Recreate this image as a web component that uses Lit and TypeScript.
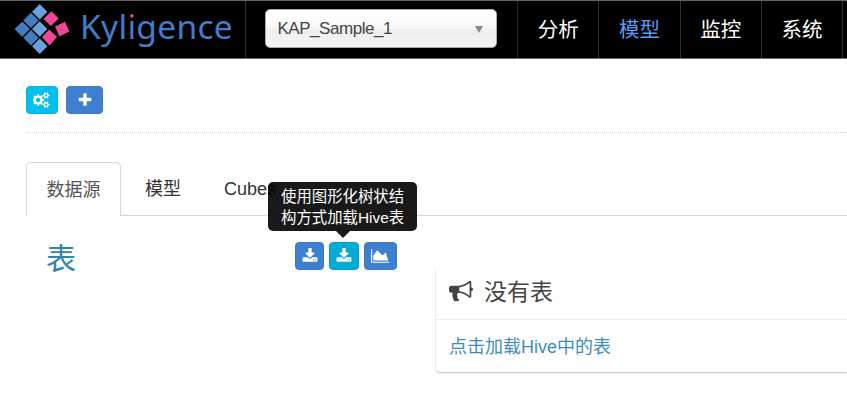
import { LitElement, html, css, svg } from "lit";
import { customElement, property } from "lit/decorators.js";

const smallGear = (y: number) =>
  `M1856 ${y}v140q0 16-149 31-12 27-30 52 51 113 51 138 0 4-4 7-122 71-124 71-8 0-46-47t-52-68q-20 2-30 2t-30-2q-14 21-52 68t-46 47q-2 0-124-71-4-3-4-7 0-25 51-138-18-25-30-52-149-15-149-31v-140q0-16 149-31 13-29 30-52-51-113-51-138 0-4 4-7 4-2 35-20t59-34 30-16q8 0 46 46.5t52 67.5q20-2 30-2t30 2q51-71 92-112l6-2q4 0 124 70 4 3 4 7 0 25-51 138 17 23 30 52 149 15 149 31z`;

const ICONS: Record<string, { w: number; d: string }> = {
  cogs: {
    w: 1920,
    d:
      "M832 896q0-106-75-181t-181-75-181 75-75 181 75 181 181 75 181-75 75-181zm768 512q0-52-38-90t-90-38-90 38-38 90q0 53 37.5 90.5t90.5 37.5 90.5-37.5 37.5-90.5zm0-1024q0-52-38-90t-90-38-90 38-38 90q0 53 37.5 90.5t90.5 37.5 90.5-37.5 37.5-90.5zm-384 421v185q0 10-7 19.5t-16 10.5l-155 24q-11 35-32 76 34 48 90 115 7 11 7 20 0 12-7 19-23 30-82.5 89.5t-78.5 59.5q-11 0-21-7l-115-90q-37 19-77 31-11 108-23 155-7 24-30 24h-186q-11 0-20-7.5t-10-17.5l-23-153q-34-10-75-31l-118 89q-7 7-20 7-11 0-21-8-144-133-144-160 0-9 7-19 10-14 41-53t47-61q-23-44-35-82l-152-24q-10-1-17-9.5t-7-19.5v-185q0-10 7-19.5t16-10.5l155-24q11-35 32-76-34-48-90-115-7-11-7-20 0-12 7-20 22-30 82-89t79-59q11 0 21 7l115 90q34-18 77-32 11-108 23-154 7-24 30-24h186q11 0 20 7.5t10 17.5l23 153q34 10 75 31l118-89q8-7 20-7 11 0 21 8 144 133 144 160 0 8-7 19-12 16-42 54t-45 60q23 48 34 82l152 23q10 2 17 10.5t7 19.5z" +
      smallGear(1338) +
      smallGear(314),
  },
  plus: {
    w: 1792,
    d: "M1600 736v192q0 40-28 68t-68 28h-416v416q0 40-28 68t-68 28h-192q-40 0-68-28t-28-68v-416h-416q-40 0-68-28t-28-68v-192q0-40 28-68t68-28h416v-416q0-40 28-68t68-28h192q40 0 68 28t28 68v416h416q40 0 68 28t28 68z",
  },
  download: {
    w: 1792,
    d: "M1344 1344q0-26-19-45t-45-19-45 19-19 45 19 45 45 19 45-19 19-45zm256 0q0-26-19-45t-45-19-45 19-19 45 19 45 45 19 45-19 19-45zm128-224v320q0 40-28 68t-68 28h-1472q-40 0-68-28t-28-68v-320q0-40 28-68t68-28h465l135 136q58 56 136 56t136-56l136-136h464q40 0 68 28t28 68zm-325-569q17 41-14 70l-448 448q-18 19-45 19t-45-19l-448-448q-31-29-14-70 17-39 59-39h256v-448q0-26 19-45t45-19h256q26 0 45 19t19 45v448h256q42 0 59 39z",
  },
  chart: {
    w: 2048,
    d: "M2048 1536v128h-2048v-1536h128v1408h1920zm-384-1024l256 896h-1664v-576l448-576 576 576z",
  },
  bullhorn: {
    w: 1792,
    d: "M1664 640q53 0 90.5 37.5t37.5 90.5-37.5 90.5-90.5 37.5v384q0 52-38 90t-90 38q-417-347-812-380-58 19-91 66t-31 100.5 40 92.5q-20 33-23 65.5t6 58 33.5 55 48 50 61.5 50.5q-29 58-111.5 83t-168.5 11.5-132-55.5q-7-23-29.5-87.5t-32-94.5-23-89-15-101 3.5-98.5 22-110.5h-122q-66 0-113-47t-47-113v-192q0-66 47-113t113-47h480q435 0 896-384 52 0 90 38t38 90v384zm-128 604v-954q-394 302-768 343v270q377 42 768 341z",
  },
};

@customElement("fa-icon")
class FaIcon extends LitElement {
  @property() name = "plus";
  static styles = css`
    :host { display: block; height: 16px; flex: none; }
    .glyph { display: block; height: 100%; fill: currentColor; }
  `;
  render() {
    const i = ICONS[this.name];
    return html`<svg class="glyph" viewBox="0 0 ${i.w} 1792">${svg`<path d=${i.d}></path>`}</svg>`;
  }
}

@customElement("app-root")
class AppRoot extends LitElement {
  static styles = css`
    :host {
      display: block;
      height: 415px;
      overflow: hidden;
      background: #fff;
      color: #444;
      font-family: "Liberation Sans", "Noto Sans CJK SC", sans-serif;
      font-size: 18px;
    }
    * { box-sizing: border-box; }
    .header {
      display: flex;
      height: 59px;
      background: #000;
      border-top: 1px solid #626262;
      border-bottom: 1px solid #6b6b6b;
    }
    .brand {
      display: flex;
      width: 246px;
      padding-left: 14px;
      border-right: 1px solid #333;
    }
    .mark { display: block; width: 58px; height: 57px; flex: none; }
    .word {
      margin-left: 8px;
      font: 33.5px/50px "Noto Sans", sans-serif;
      letter-spacing: 0.3px;
      color: #437dc8;
      white-space: nowrap;
    }
    .dotted {
      background: linear-gradient(#ee4795 0 17px, #437dc8 17px);
      background-clip: text;
      -webkit-background-clip: text;
      color: transparent;
      display: inline-block;
      height: 50px;
      vertical-align: top;
    }
    .picker {
      width: 272px;
      border-right: 1px solid #272727;
      padding: 8px 0 0 19.4px;
    }
    .select {
      display: flex;
      align-items: center;
      justify-content: space-between;
      width: 232px;
      height: 39px;
      padding: 1px 13px 0 11px;
      border: 1px solid #aaa;
      border-radius: 5px;
      background: linear-gradient(#fff 20%, #f6f6f6 50%, #eee 52%, #f4f4f4 100%);
      font-size: 17px;
      letter-spacing: -0.45px;
    }
    .arrow {
      border: 4.5px solid transparent;
      border-top: 7px solid #888;
      border-bottom: 0;
    }
    .nav {
      width: 81.3px;
      border-right: 1px solid #333;
      text-align: center;
      color: #fff;
      font-size: 20.5px;
      line-height: 57px;
      flex: none;
    }
    .nav.on { color: #5b9bf0; }
    .tools {
      display: flex;
      gap: 8px;
      height: 74px;
      margin-left: 26px;
      padding-top: 27px;
      border-bottom: 1px dotted #d4d4d4;
    }
    .btn {
      display: flex;
      align-items: center;
      justify-content: center;
      height: 28px;
      border-radius: 4px;
      background: #3f7fd0;
      border: 1px solid #3b79c9;
      color: #fff;
    }
    .cyan { background: #00c0ef; border-color: #00b3df; }
    .teal { background: #00acd6; border-color: #00a0c8; }
    .w32 { width: 32px; }
    .w37 { width: 37px; }
    .w29 { width: 29.6px; }
    .w33 { width: 33px; }
    .tabs {
      display: flex;
      height: 54px;
      margin: 29px 0 0 26px;
      line-height: 55px;
      color: #333;
    }
    .tab { border-bottom: 1px solid #d6d6d6; }
    .tab.on {
      width: 95px;
      padding-left: 19.5px;
      border: 1px solid #d6d6d6;
      border-bottom: 0;
      border-radius: 5px 5px 0 0;
      color: #555;
      line-height: 54px;
    }
    .model { padding-left: 24px; width: 103px; }
    .cubes { flex: 1; }
    .body { display: flex; }
    .left { display: flex; width: 436px; padding: 26px 0 0 46px; }
    .title { width: 248.8px; font-size: 30px; line-height: 34px; color: #3085b0; }
    .actions { display: flex; align-items: flex-start; gap: 5px; }
    .anchor { position: relative; }
    .tip {
      position: absolute;
      bottom: 39px;
      left: -61.4px;
      width: 149px;
      height: 49px;
      padding: 5px 12px 0 13px;
      border-radius: 5px;
      background: rgba(0, 0, 0, 0.9);
      color: #fff;
      font-size: 15.4px;
      line-height: 20.5px;
      white-space: nowrap;
    }
    .tip::after {
      content: "";
      position: absolute;
      left: 68px;
      top: 100%;
      border: 7px solid transparent;
      border-top-color: rgba(0, 0, 0, 0.9);
      border-bottom: 0;
    }
    .card {
      flex: 1;
      height: 105px;
      margin-top: 51px;
      border-radius: 0 0 0 4px;
      box-shadow: 0 1px 2px rgba(0, 0, 0, 0.25);
      clip-path: inset(0 0 -4px -3px);
    }
    .head {
      display: flex;
      align-items: center;
      height: 53px;
      padding: 0 0 6px 13px;
      border-bottom: 1px solid #eee;
      font-size: 23px;
    }
    .horn { height: 24px; margin: 1px 11px 0 0; }
    .link { padding-left: 13px; line-height: 54px; color: #3c8dbc; }
  `;

  render() {
    const blocks = [
      ["#6aa1da", "25.7 3 33.4 10.7 25.7 18.4 18 10.7"],
      ["#437dc0", "17 11.7 24.7 19.4 17 27.1 9.3 19.4"],
      ["#437dc0", "8.3 20.4 16 28.1 8.3 35.8 .6 28.1"],
      ["#6aa1da", "25.7 20.3 33.4 28 25.7 35.7 18 28"],
      ["#437dc0", "17 29 24.7 36.7 17 44.4 9.3 36.7"],
      ["#6aa1da", "25.7 37.6 33.4 45.3 25.7 53 18 45.3"],
      ["#ee4795", "37.4 10.3 44.7 17.5 37 24.9 29.5 18"],
      ["#ee4795", "35.3 28.6 43 36 35.5 44.4 28 36"],
      ["#ee4795", "41 25.6 51 20.8 55.4 30.6 45.4 35.4"],
    ];
    return html`
      <div class="header">
        <div class="brand">
          <svg class="mark" viewBox="0 0 58 57">
            ${blocks.map(([c, p]) => svg`<polygon fill=${c} points=${p}></polygon>`)}
          </svg>
          <div class="word">Kyl<span class="dotted">i</span>gence</div>
        </div>
        <div class="picker">
          <div class="select"><span>KAP_Sample_1</span><span class="arrow"></span></div>
        </div>
        ${["分析", "模型", "监控", "系统"].map(
          (t, i) => html`<div class="nav ${i === 1 ? "on" : ""}">${t}</div>`
        )}
      </div>
      <div class="tools">
        <div class="btn cyan w32"><fa-icon name="cogs"></fa-icon></div>
        <div class="btn w37"><fa-icon name="plus"></fa-icon></div>
      </div>
      <div class="tabs">
        <div class="tab on">数据源</div>
        <div class="tab model">模型</div>
        <div class="tab cubes">Cubes</div>
      </div>
      <div class="body">
        <div class="left">
          <div class="title">表</div>
          <div class="actions">
            <div class="btn w29"><fa-icon name="download"></fa-icon></div>
            <div class="anchor">
              <div class="btn teal w29"><fa-icon name="download"></fa-icon></div>
              <div class="tip">使用图形化树状结<br />构方式加载Hive表</div>
            </div>
            <div class="btn w33"><fa-icon name="chart"></fa-icon></div>
          </div>
        </div>
        <div class="card">
          <div class="head"><fa-icon class="horn" name="bullhorn"></fa-icon>没有表</div>
          <div class="link">点击加载Hive中的表</div>
        </div>
      </div>
    `;
  }
}
